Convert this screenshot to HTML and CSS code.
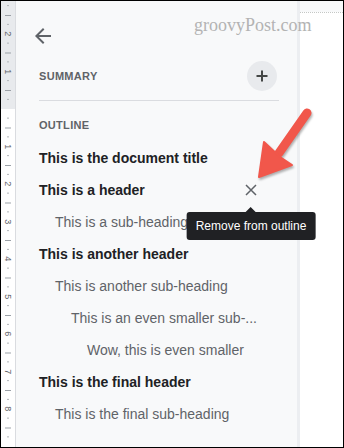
FILE: index.html
```html
<!DOCTYPE html>
<html lang="en">
<head>
  <meta charset="UTF-8">
  <title>Document outline</title>
  <link rel="stylesheet" href="styles.css">
</head>
<body>
  <div class="frame">
    <div class="ruler">
      <span class="mark">2</span>
      <span class="mark">1</span>
      <span class="mark"></span>
      <span class="mark">1</span>
      <span class="mark">2</span>
      <span class="mark">3</span>
      <span class="mark">4</span>
      <span class="mark">5</span>
      <span class="mark">6</span>
      <span class="mark">7</span>
      <span class="mark">8</span>
    </div>

    <div class="panel">
      <button class="back" title="Back">
        <svg width="24" height="24" viewBox="0 0 24 24"><path d="M20 11H7.83l5.59-5.59L12 4l-8 8 8 8 1.41-1.41L7.83 13H20v-2z" fill="#5f6368"/></svg>
      </button>

      <div class="summary-row">
        <span class="section-label">Summary</span>
        <button class="add" title="Add summary">
          <svg width="14" height="14" viewBox="0 0 14 14"><path d="M7 1.5v11M1.5 7h11" stroke="#444746" stroke-width="2"/></svg>
        </button>
      </div>

      <div class="divider"></div>

      <div class="section-label outline-label">Outline</div>

      <ul class="outline">
        <li class="item level-0">This is the document title</li>
        <li class="item level-0">
          <span class="text">This is a header</span>
          <span class="remove">
            <svg width="14" height="14" viewBox="0 0 14 14"><path d="M2 2l10 10M12 2L2 12" stroke="#5f6368" stroke-width="1.5"/></svg>
            <span class="tooltip">Remove from outline</span>
          </span>
        </li>
        <li class="item level-1">This is a sub-heading</li>
        <li class="item level-0">This is another header</li>
        <li class="item level-1">This is another sub-heading</li>
        <li class="item level-2">This is an even smaller sub-...</li>
        <li class="item level-3">Wow, this is even smaller</li>
        <li class="item level-0">This is the final header</li>
        <li class="item level-1">This is the final sub-heading</li>
      </ul>
    </div>

    <div class="canvas">
      <div class="sheet"></div>
    </div>

    <div class="watermark">groovyPost.com</div>

    <svg class="pointer" width="344" height="448" viewBox="0 0 344 448">
      <g fill="#f1574b" stroke="#f1574b">
        <line x1="307" y1="113" x2="279" y2="153" stroke-width="9" stroke-linecap="round"/>
        <path d="M264 142 L259 177 L292 165 L280 157 Z" stroke-width="2" stroke-linejoin="round"/>
      </g>
    </svg>
  </div>
</body>
</html>
```

FILE: styles.css
```css
* {
  box-sizing: border-box;
}

body {
  margin: 0;
  font-family: "Liberation Sans", Arial, sans-serif;
  background: #fff;
}

.frame {
  position: relative;
  display: flex;
  width: 344px;
  height: 448px;
  border: 1px solid #000;
  overflow: hidden;
}

/* vertical ruler */
.ruler {
  flex: 0 0 15px;
  display: flex;
  flex-direction: column;
  padding-top: 14px;
  border-right: 1px solid #dadce0;
  background:
    linear-gradient(to bottom, #9aa0a6 0 1px, transparent 1px) 4px 14px / 6px 37.5px repeat-y,
    linear-gradient(to bottom, transparent 9px, #b0b4b8 9px 10px, transparent 10px 28px, #b0b4b8 28px 29px, transparent 29px) 6px 14px / 2px 37.5px repeat-y,
    linear-gradient(#e8eaed 0 108px, #fff 108px);
}

.mark {
  flex: 0 0 37.5px;
  display: flex;
  align-items: center;
  justify-content: center;
  font-size: 9px;
  color: #5f6368;
  transform: rotate(90deg);
}

/* outline panel */
.panel {
  flex: 0 0 284px;
  min-width: 0;
  background: #f8f9fa;
  border-right: 3px solid #eceef1;
  padding: 0 18px 0 23px;
}

button {
  border: none;
  background: none;
  padding: 0;
  cursor: pointer;
}

.back {
  display: block;
  width: 24px;
  height: 24px;
  margin: 23px 0 0 -8px;
}

.summary-row {
  display: flex;
  align-items: center;
  justify-content: space-between;
  height: 30px;
  margin-top: 13px;
}

.section-label {
  font-size: 11px;
  font-weight: 700;
  letter-spacing: 0.3px;
  text-transform: uppercase;
  color: #5f6368;
}

.add {
  display: flex;
  align-items: center;
  justify-content: center;
  width: 30px;
  height: 30px;
  margin-right: 2px;
  border-radius: 50%;
  background: #e8eaed;
}

.divider {
  height: 1px;
  margin-top: 9px;
  background: #dadce0;
}

.outline-label {
  line-height: 16px;
  margin-top: 16px;
}

.outline {
  list-style: none;
  margin: 9px 0 0;
  padding: 0;
}

.item {
  display: flex;
  align-items: center;
  height: 32px;
  padding-right: 16px;
  font-size: 14px;
  white-space: nowrap;
  color: #5f6368;
}

.item.level-0 {
  font-weight: 700;
  color: #202124;
}

.item.level-1 { padding-left: 16px; }
.item.level-2 { padding-left: 32px; }
.item.level-3 { padding-left: 48px; }

.remove {
  position: relative;
  display: flex;
  align-items: center;
  justify-content: center;
  width: 20px;
  height: 32px;
  margin-left: auto;
  margin-right: 2px;
}

.tooltip {
  position: absolute;
  top: calc(100% + 6px);
  left: 50%;
  transform: translateX(-50%);
  z-index: 2;
  padding: 0 9px;
  height: 28px;
  line-height: 28px;
  border-radius: 3px;
  background: #202124;
  color: #fff;
  font-size: 12px;
  font-weight: 400;
  white-space: nowrap;
}

.tooltip::before {
  content: "";
  position: absolute;
  top: -5px;
  left: 50%;
  margin-left: -5px;
  border: 5px solid transparent;
  border-top: none;
  border-bottom-color: #202124;
}

/* document area */
.canvas {
  flex: 1;
  display: flex;
  padding-top: 11px;
  background: #f8f9fa;
}

.sheet {
  flex: 1;
  background: #fff;
  border-top: 1px dotted #c4c7c5;
}

/* overlays */
.watermark {
  position: absolute;
  left: 193px;
  top: 14px;
  font-family: "Liberation Serif", serif;
  font-size: 18px;
  line-height: 20px;
  color: #b3b3b3;
}

.pointer {
  position: absolute;
  left: -1px;
  top: -1px;
  pointer-events: none;
  filter: drop-shadow(1px 2px 1px rgba(0, 0, 0, 0.3));
}
```
